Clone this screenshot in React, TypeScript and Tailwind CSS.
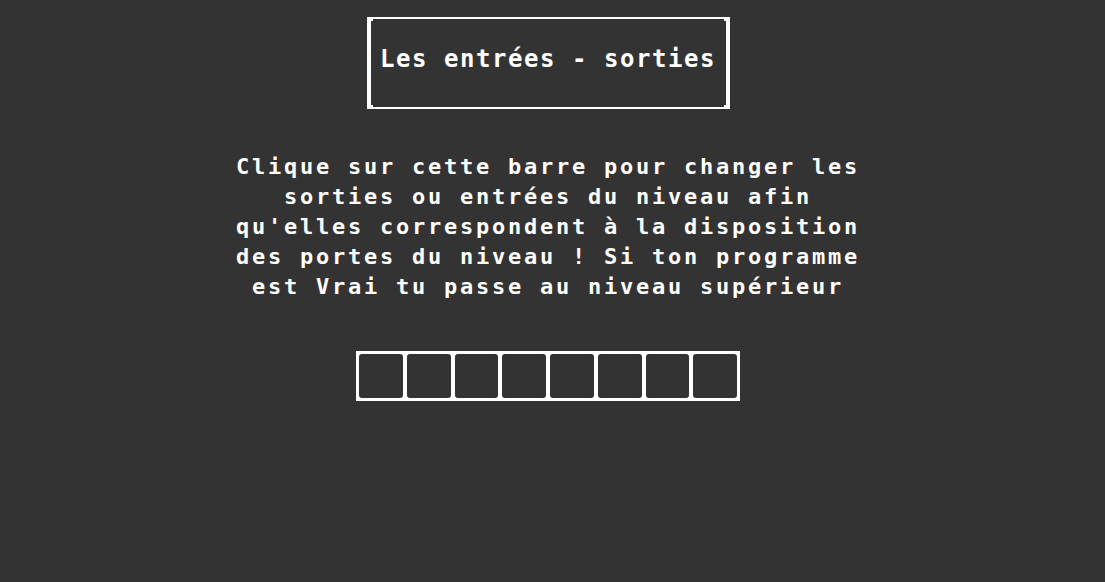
import React from "react";

const lines = [
  "Clique sur cette barre pour changer les",
  "sorties ou entrées du niveau afin",
  "qu'elles correspondent à la disposition",
  "des portes du niveau ! Si ton programme",
  "est Vrai tu passe au niveau supérieur",
];

export default function App() {
  return (
    <div className="min-h-screen w-full bg-[#333333] text-white">
      <div
        className="w-[1096px] flex flex-col items-center pt-[17px]"
        style={{ fontFamily: '"DejaVu Sans Mono", "Liberation Mono", monospace' }}
      >
        <div className="relative w-[363px] h-[92px] border-x-4 border-y-2 border-white flex justify-center pt-[25px]">
          <span className="text-[24px] leading-[30px] font-bold tracking-[1.55px] whitespace-pre">
            Les entrées - sorties
          </span>
          <span className="absolute left-0 top-0 w-[2px] h-[2px] bg-white" />
          <span className="absolute right-0 top-0 w-[2px] h-[2px] bg-white" />
          <span className="absolute left-0 bottom-0 w-[2px] h-[2px] bg-white" />
          <span className="absolute right-0 bottom-0 w-[2px] h-[2px] bg-white" />
        </div>

        <div className="mt-[43px] flex flex-col items-center text-[22px] leading-[30px] font-bold tracking-[2.75px]">
          {lines.map((l) => (
            <div key={l} className="whitespace-pre">
              {l}
            </div>
          ))}
        </div>

        <div className="mt-[49px] w-[384px] h-[50px] bg-white p-[3px] flex gap-[4px]">
          {Array.from({ length: 8 }).map((_, i) => (
            <div key={i} className="flex-1 bg-[#333333] rounded-[3px]" />
          ))}
        </div>
      </div>
    </div>
  );
}
